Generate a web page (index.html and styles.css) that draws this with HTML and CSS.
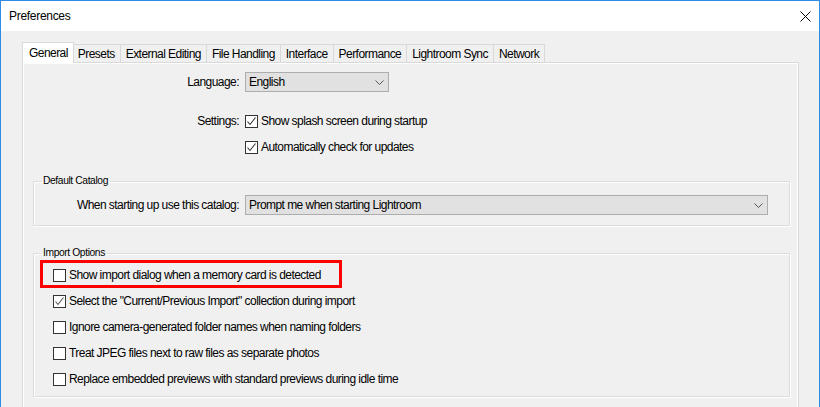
FILE: index.html
```html
<!DOCTYPE html>
<html lang="en">
<head>
    <meta charset="UTF-8">
    <meta name="viewport" content="width=device-width, initial-scale=1.0">
    <title>Preferences</title>
    <link rel="stylesheet" href="styles.css">
</head>
<body>
    <div class="window">
        <div class="titlebar">
            <span class="title">Preferences</span>
            <span class="close">
                <svg width="11" height="11" viewBox="0 0 11 11"><path d="M0.5 0.5 L10.5 10.5 M10.5 0.5 L0.5 10.5" stroke="#000" stroke-width="1" fill="none"/></svg>
            </span>
        </div>
        <div class="content">
            <div class="tabs">
                <div class="tab active">General</div>
                <div class="tab">Presets</div>
                <div class="tab">External Editing</div>
                <div class="tab">File Handling</div>
                <div class="tab">Interface</div>
                <div class="tab">Performance</div>
                <div class="tab">Lightroom Sync</div>
                <div class="tab">Network</div>
            </div>
            <div class="panel">
                <div class="page">
                    <div class="field-row lang-row">
                        <span class="field-label">Language:</span>
                        <div class="select lang">
                            <span>English</span>
                            <svg class="chevron" width="9" height="5" viewBox="0 0 9 5"><path d="M0.5 0.5 L4.5 4.5 L8.5 0.5" stroke="#555" stroke-width="1" fill="none"/></svg>
                        </div>
                    </div>
                    <div class="field-row check-row">
                        <span class="field-label">Settings:</span>
                        <span class="check"><svg width="11" height="11" viewBox="0 0 11 11"><path d="M1.5 5.5 L4 8.5 L9.5 1.5" stroke="#333" stroke-width="1.1" fill="none"/></svg></span>
                        <span>Show splash screen during startup</span>
                    </div>
                    <div class="field-row check-row">
                        <span class="field-label"></span>
                        <span class="check"><svg width="11" height="11" viewBox="0 0 11 11"><path d="M1.5 5.5 L4 8.5 L9.5 1.5" stroke="#333" stroke-width="1.1" fill="none"/></svg></span>
                        <span>Automatically check for updates</span>
                    </div>

                    <fieldset class="group catalog">
                        <legend>Default Catalog</legend>
                        <div class="field-row">
                            <span class="field-label">When starting up use this catalog:</span>
                            <div class="select wide">
                                <span>Prompt me when starting Lightroom</span>
                                <svg class="chevron" width="9" height="5" viewBox="0 0 9 5"><path d="M0.5 0.5 L4.5 4.5 L8.5 0.5" stroke="#555" stroke-width="1" fill="none"/></svg>
                            </div>
                        </div>
                    </fieldset>

                    <fieldset class="group import">
                        <legend>Import Options</legend>
                        <div class="option highlight">
                            <span class="check"></span>
                            <span>Show import dialog when a memory card is detected</span>
                        </div>
                        <div class="option">
                            <span class="check"><svg width="11" height="11" viewBox="0 0 11 11"><path d="M1.5 5.5 L4 8.5 L9.5 1.5" stroke="#555" stroke-width="1.1" fill="none"/></svg></span>
                            <span>Select the "Current/Previous Import" collection during import</span>
                        </div>
                        <div class="option">
                            <span class="check"></span>
                            <span>Ignore camera-generated folder names when naming folders</span>
                        </div>
                        <div class="option">
                            <span class="check"></span>
                            <span>Treat JPEG files next to raw files as separate photos</span>
                        </div>
                        <div class="option">
                            <span class="check"></span>
                            <span>Replace embedded previews with standard previews during idle time</span>
                        </div>
                    </fieldset>
                </div>
            </div>
        </div>
    </div>
</body>
</html>
```

FILE: styles.css
```css
body {
    margin: 0;
    font-family: "Liberation Sans", Arial, sans-serif;
    font-size: 12px;
    letter-spacing: -0.55px;
    color: #000;
    background: #f0f0f0;
}
.window {
    width: 820px;
    height: 407px;
    box-sizing: border-box;
    border: 1px solid #2e8de4;
    border-bottom: none;
    background: #f0f0f0;
    overflow: hidden;
}
.titlebar {
    height: 30px;
    background: #fff;
    display: flex;
    align-items: center;
    justify-content: space-between;
    padding: 0 8px 0 8px;
}
.title {
    font-size: 12px;
    letter-spacing: -0.3px;
}
.close {
    display: flex;
}
.content {
    padding: 11px 20px 0 21px;
}
.tabs {
    display: flex;
    align-items: flex-end;
    height: 20px;
    position: relative;
    z-index: 1;
}
.tab {
    height: 18px;
    box-sizing: border-box;
    border: 1px solid #d9d9d9;
    border-bottom: none;
    margin-left: -1px;
    padding: 0 5px;
    display: flex;
    align-items: center;
    background: #f0f0f0;
}
.tab:first-child {
    margin-left: 0;
}
.tab.active {
    height: 21px;
    margin-bottom: -1px;
    margin-right: -1px;
    padding: 0 5px 1px 6px;
    background: #fff;
    position: relative;
    z-index: 1;
}
.panel {
    height: 360px;
    border: 1px solid #d9d9d9;
    background: #fff;
    padding: 1px;
    box-sizing: border-box;
}
.page {
    height: 100%;
    background: #f0f0f0;
    padding-top: 8px;
    box-sizing: border-box;
}
.field-row {
    display: flex;
    align-items: center;
}
.field-label {
    width: 215px;
    margin-right: 6px;
    text-align: right;
    flex: none;
}
.lang-row {
    height: 20px;
    margin-bottom: 16px;
}
.check-row {
    height: 26px;
}
.select {
    display: flex;
    align-items: center;
    justify-content: space-between;
    height: 20px;
    box-sizing: border-box;
    border: 1px solid #adadad;
    background: #e1e1e1;
    padding: 0 4px 0 3px;
}
.select.lang {
    width: 144px;
}
.select.wide {
    width: 523px;
}
.check {
    width: 13px;
    height: 13px;
    box-sizing: border-box;
    border: 1px solid #333;
    background: #fff;
    margin-right: 3px;
    flex: none;
    display: flex;
}
.group {
    margin: 14px 7px 0 9px;
    padding: 7px 0 10px;
    border: 1px solid #dcdcdc;
    box-shadow: 1px 1px 0 #fff, inset 1px 1px 0 #fff;
    min-inline-size: 0;
}
.group legend {
    margin-left: 7px;
    padding: 0 2px;
    font-size: 10.3px;
    letter-spacing: -0.4px;
    line-height: 14px;
}
.catalog .field-label {
    width: 205px;
}
.import {
    margin-top: 20px;
    padding: 2px 0 4px;
}
.option {
    display: flex;
    align-items: center;
    height: 26px;
    padding-left: 19px;
}
.highlight {
    position: relative;
}
.highlight::after {
    content: "";
    position: absolute;
    left: 6px;
    top: -2px;
    width: 302px;
    height: 28px;
    box-sizing: border-box;
    border: 3px solid #f00;
}
```
